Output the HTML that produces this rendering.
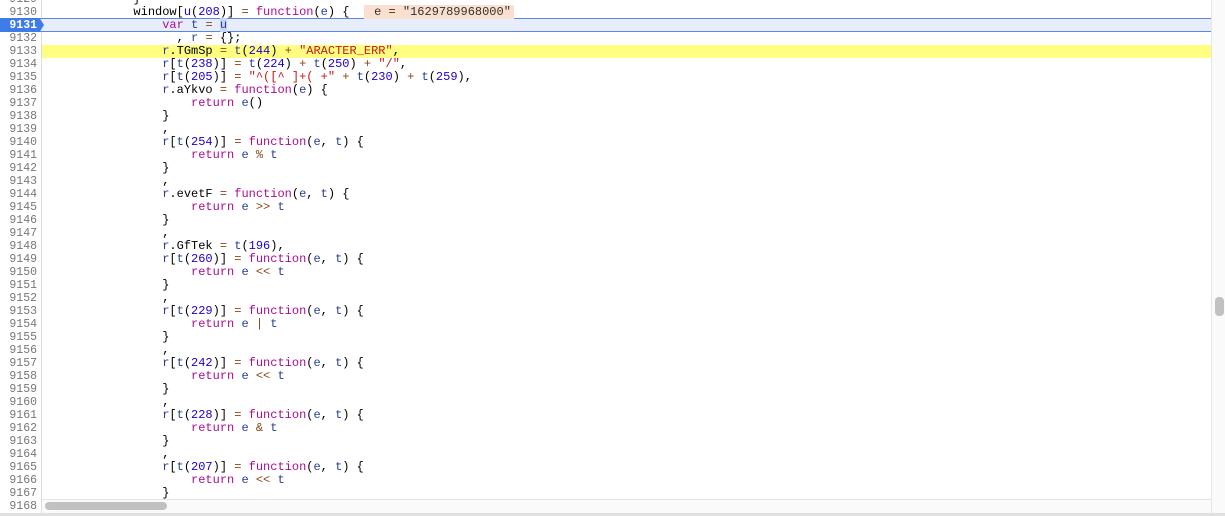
<!DOCTYPE html><html><head><style>
body{margin:0;width:1225px;height:516px;overflow:hidden;background:#fff;position:relative;font-family:"Liberation Mono",monospace;font-size:12px}
#g{position:absolute;left:0;top:0;width:41px;height:516px;background:#fff;border-right:1px solid #ddd}
.row{position:absolute;left:0;width:1211px;height:13px;line-height:13px;white-space:pre}
.n{position:absolute;left:0;width:37px;text-align:right;color:#777;font-size:11.5px}
.c{position:absolute;left:47px;color:#000}
.k{color:#aa0d91}.b{color:#1c00cf}.s{color:#c41a16}.o{color:#8b4513}.v{color:#2a3e8f}
</style></head><body>
<div id="g"></div>
<div class="row" style="top:18px;background:#e8edfc;border-top:1px solid #5b86e5;border-bottom:1px solid #5b86e5;height:12px"></div>
<div class="row" style="top:45px;background:#fffe80;left:42px;width:1169px"></div>
<div style="position:absolute;left:0;top:18px;width:44px;height:14px;background:#3d7ce9;clip-path:polygon(0 0,90% 0,100% 50%,90% 100%,0 100%)"></div>
<div id="code"></div>
<div style="position:absolute;left:42px;top:499px;width:1169px;height:13px;background:#fafafa;border-top:1px solid #e6e6e6"></div>
<div style="position:absolute;left:45px;top:502px;width:122px;height:8px;border-radius:4px;background:#c1c1c1"></div>
<div style="position:absolute;left:1211px;top:0;width:14px;height:516px;background:#fafafa;border-left:1px solid #e6e6e6"></div>
<div style="position:absolute;left:1215px;top:297px;width:9px;height:19px;border-radius:4px;background:#c1c1c1"></div>
<div style="position:absolute;left:0;top:513px;width:1225px;height:3px;background:#e0e0e0"></div>
<script>
const L=[
[9129,'            }'],
[9130,'            window[<span class="b">u</span>(<span class="b">208</span>)] <span class="o">=</span> <span class="k">function</span>(<span class="v">e</span>) {  <span style="background:#fbe0cf;color:#333;padding:0 3px"> e = "1629789968000"</span>'],
[9131,'                <span class="k">var</span> <span class="v">t</span> <span class="o">=</span> <span class="v" style="background:#c5d3f6">u</span>'],
[9132,'                  , <span class="v">r</span> <span class="o">=</span> {};'],
[9133,'                <span class="v">r</span>.TGmSp <span class="o">=</span> <span class="v">t</span>(<span class="b">244</span>) <span class="o">+</span> <span class="s">"ARACTER_ERR"</span>,'],
[9134,'                <span class="v">r</span>[<span class="v">t</span>(<span class="b">238</span>)] <span class="o">=</span> <span class="v">t</span>(<span class="b">224</span>) <span class="o">+</span> <span class="v">t</span>(<span class="b">250</span>) <span class="o">+</span> <span class="s">"/"</span>,'],
[9135,'                <span class="v">r</span>[<span class="v">t</span>(<span class="b">205</span>)] <span class="o">=</span> <span class="s">"^([^ ]+( +"</span> <span class="o">+</span> <span class="v">t</span>(<span class="b">230</span>) <span class="o">+</span> <span class="v">t</span>(<span class="b">259</span>),'],
[9136,'                <span class="v">r</span>.aYkvo <span class="o">=</span> <span class="k">function</span>(<span class="v">e</span>) {'],
[9137,'                    <span class="k">return</span> <span class="v">e</span>()'],
[9138,'                }'],[9139,'                ,']];
function fn(n,num,op){return [[n,'                <span class="v">r</span>[<span class="v">t</span>(<span class="b">'+num+'</span>)] <span class="o">=</span> <span class="k">function</span>(<span class="v">e</span>, <span class="v">t</span>) {'],[n+1,'                    <span class="k">return</span> <span class="v">e</span> <span class="o">'+op+'</span> <span class="v">t</span>'],[n+2,'                }'],[n+3,'                ,']];}
L.push(...fn(9140,254,'%'));
L.push([9144,'                <span class="v">r</span>.evetF <span class="o">=</span> <span class="k">function</span>(<span class="v">e</span>, <span class="v">t</span>) {'],[9145,'                    <span class="k">return</span> <span class="v">e</span> <span class="o">&gt;&gt;</span> <span class="v">t</span>'],[9146,'                }'],[9147,'                ,'],[9148,'                <span class="v">r</span>.GfTek <span class="o">=</span> <span class="v">t</span>(<span class="b">196</span>),']);
L.push(...fn(9149,260,'&lt;&lt;'),...fn(9153,229,'|'),...fn(9157,242,'&lt;&lt;'),...fn(9161,228,'&amp;'));
L.push(...fn(9165,207,'&lt;&lt;').slice(0,3),[9168,'']);
let h='';
for(const [n,c] of L){const top=6+13*(n-9130);h+=`<div class="row" style="top:${top}px;background:transparent"><span class="n"${n==9131?' style="color:#fff;font-weight:bold"':''}>${n}</span><span class="c">${c}</span></div>`;}
document.getElementById('code').innerHTML=h;
</script>
</body></html>
